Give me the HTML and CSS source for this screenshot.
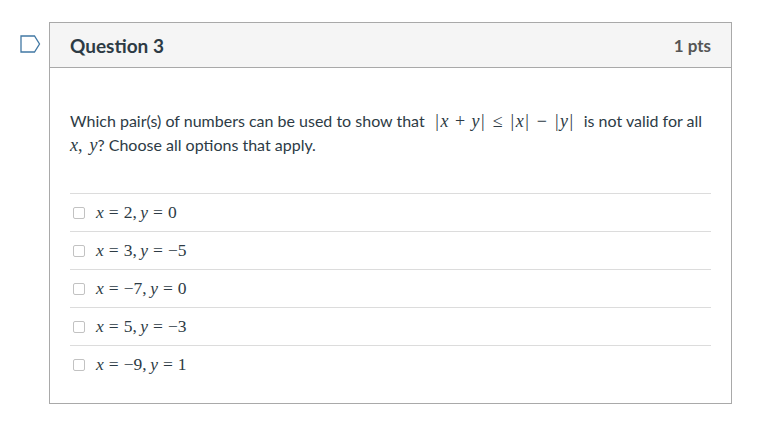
FILE: index.html
```html
<!DOCTYPE html>
<html>
<head>
<meta charset="utf-8">
<link rel="stylesheet" href="styles.css">
</head>
<body>
<div class="page">
  <svg class="flag" width="21" height="18" viewBox="0 0 21 18">
    <path d="M1 1 H14.5 L19.5 9 L14.5 17 H1 Z" fill="none" stroke="#4178a4" stroke-width="1.3" stroke-linejoin="miter"/>
  </svg>
  <div class="card">
    <div class="header">
      <span class="title">Question 3</span>
      <span class="pts">1 pts</span>
    </div>
    <div class="body">
      <p class="question">Which pair(s) of numbers can be used to show that <span class="math q-math"><span class="bar">|</span><span class="mi">x</span><span class="mo">+</span><span class="mi">y</span><span class="bar">|</span><span class="mo">≤</span><span class="bar">|</span><span class="mi">x</span><span class="bar">|</span><span class="mo">−</span><span class="bar">|</span><span class="mi">y</span><span class="bar">|</span></span> is not valid for all <span class="math q-inline"><span class="mi">x</span>,<span class="sp"></span><span class="mi">y</span></span>? Choose all options that apply.</p>
      <div class="answers">
        <div class="answer"><span class="box"></span><span class="math"><span class="mi">x</span><span class="mo">=</span>2,<span class="sp"></span><span class="mi">y</span><span class="mo">=</span>0</span></div>
        <div class="answer"><span class="box"></span><span class="math"><span class="mi">x</span><span class="mo">=</span>3,<span class="sp"></span><span class="mi">y</span><span class="mo">=</span>−5</span></div>
        <div class="answer"><span class="box"></span><span class="math"><span class="mi">x</span><span class="mo">=</span>−7,<span class="sp"></span><span class="mi">y</span><span class="mo">=</span>0</span></div>
        <div class="answer"><span class="box"></span><span class="math"><span class="mi">x</span><span class="mo">=</span>5,<span class="sp"></span><span class="mi">y</span><span class="mo">=</span>−3</span></div>
        <div class="answer"><span class="box"></span><span class="math"><span class="mi">x</span><span class="mo">=</span>−9,<span class="sp"></span><span class="mi">y</span><span class="mo">=</span>1</span></div>
      </div>
    </div>
  </div>
</div>
</body>
</html>
```
FILE: styles.css
```css
html, body {
  margin: 0;
  padding: 0;
  background: #ffffff;
}
body {
  font-family: Lato, "Liberation Sans", sans-serif;
  color: #2d3b45;
}
.page {
  display: flex;
  align-items: flex-start;
  padding: 22px 0 0 20px;
  gap: 8px;
}
.flag {
  margin-top: 13px;
  flex: none;
}
.card {
  width: 681px;
  border: 1px solid #a9a9a9;
}
.header {
  height: 44px;
  background: #f5f5f5;
  border-bottom: 1px solid #a9a9a9;
  display: flex;
  align-items: center;
  justify-content: space-between;
  padding: 0 20px;
}
.title {
  font-weight: 700;
  font-size: 19px;
  color: #2d3b45;
}
.pts {
  font-weight: 700;
  font-size: 17px;
  color: #555555;
}
.body {
  padding: 41px 20px 20px 20px;
}
.question {
  margin: 0 0 36px 0;
  font-size: 16px;
  line-height: 24px;
}
.math {
  font-family: "Liberation Serif", "DejaVu Serif", serif;
  font-size: 17.5px;
  white-space: nowrap;
}
.q-math {
  font-size: 18px;
  margin: 0 5px 0 5px;
}
.q-math .mo {
  margin: 0 6.5px;
}
.q-math .bar {
  margin: 0 1.5px;
}
.q-inline {
  font-size: 18px;
}
.q-inline .sp {
  width: 7px;
}
.mi {
  font-style: italic;
}
.mo {
  margin: 0 5px;
}
.sp {
  display: inline-block;
  width: 3.5px;
}
.answer {
  height: 37px;
  border-top: 1px solid #dcdcdc;
  display: flex;
  align-items: center;
  padding-left: 3px;
}
.box {
  width: 10px;
  height: 10px;
  border: 1px solid #c2c2c2;
  border-radius: 2px;
  margin-right: 11px;
  flex: none;
}
```
